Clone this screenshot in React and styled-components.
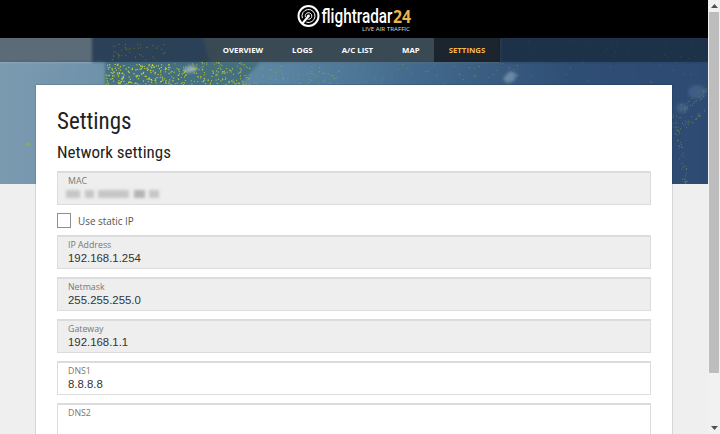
import React, { useMemo } from 'react';
import styled, { createGlobalStyle } from 'styled-components';

const Global = createGlobalStyle`
html, body {
  margin: 0;
  padding: 0;
  height: 434px;
  overflow: hidden;
  background: #f1f1f1;
}
`

const Shell = styled.div`
display: flex;
width: 720px;
height: 434px;
overflow: hidden;
`
const Page = styled.div`
width: 708px;
height: 434px;
overflow: hidden;
background: #efefef;
font-family: "Open Sans", sans-serif;
`
const Header = styled.header`
height: 38px;
background: #000;
display: flex;
justify-content: center;
align-items: center;
`
const Hero = styled.div`
position: relative;
height: 146px;
overflow: hidden;
`
const MapArt = styled.svg`
position: absolute;
left: 0;
top: 0;
`
const LandLayer = styled.g`
filter: blur(1.5px);
`
const DotLayer = styled.g`
filter: blur(0.35px);
`
const Nav = styled.nav`
position: relative;
height: 24px;
display: flex;
justify-content: center;
background: rgba(24, 36, 48, 0.5);
`
const NavItem = styled.a`
padding: 0 14.5px;
line-height: 24px;
font-size: 7.8px;
font-weight: 700;
color: ${p => (p.$active ? '#f5b94d' : '#fff')};
background: ${p => (p.$active ? 'rgba(16, 22, 30, 0.72)' : 'transparent')};
`
const Card = styled.main`
position: relative;
width: 594px;
margin: -99px auto 0;
padding: 21px;
background: #fff;
box-shadow: 0 0 1px rgba(0, 0, 0, 0.6);
`
const Title = styled.h1`
margin: 2px 0 0;
font-family: Roboto, sans-serif;
font-stretch: condensed;
font-weight: 400;
font-size: 23px;
line-height: 28px;
color: #222;
`
const Subtitle = styled.h2`
margin: 7px 0 9px;
font-family: Roboto, sans-serif;
font-stretch: condensed;
font-weight: 400;
font-size: 17px;
line-height: 19px;
color: #222;
`
const Field = styled.div`
box-sizing: border-box;
height: 34px;
margin-bottom: 8px;
padding: 3px 10px 0;
background: ${p => (p.$locked ? '#eeeeee' : '#fff')};
border: 1px solid #dcdcdc;
border-top-width: 2px;
`
const Label = styled.div`
font-size: 8.8px;
line-height: 11px;
color: #777;
`
const Value = styled.div`
font-family: "Liberation Sans", Arial, sans-serif;
font-size: 11.4px;
line-height: 14px;
color: #333;
`
const Smudges = styled.div`
display: flex;
gap: 4.5px;
margin: 3px 0 0 -2px;
filter: blur(1.5px);
`
const Smudge = styled.span`
width: ${p => p.$w}px;
height: 8px;
background: ${p => p.$tone || '#c6c6c6'};
`
const CheckRow = styled.label`
display: flex;
align-items: center;
gap: 7px;
height: 15px;
margin: 0 0 7px;
font-size: 9.9px;
color: #555;
`
const Box = styled.span`
box-sizing: border-box;
width: 14px;
height: 15px;
background: #fff;
border: 1px solid #8f8f8f;
`
const Scrollbar = styled.div`
box-sizing: border-box;
width: 12px;
height: 434px;
padding: 0 1px;
background: #f1f1f1;
display: flex;
flex-direction: column;
`
const ArrowCell = styled.div`
height: 12px;
display: flex;
align-items: center;
justify-content: center;
`
const Thumb = styled.div`
height: 361px;
background: #bdbdbd;
`
const Gap = styled.div`
flex: 1;
`

// little seeded random so the dots stay put between runs
const seeded = seed => () => {
  seed = (seed * 16807) % 2147483647;
  return seed / 2147483647;
};

const scatter = (rand, count, x0, x1, y0, y1, fill, r) => {
  const out = [];
  for (let i = 0; i < count; i++) {
    out.push({
      x: x0 + rand() * (x1 - x0),
      y: y0 + rand() * (y1 - y0),
      fill,
      r,
    });
  }
  return out;
};

// dots strung along a route, for the coast traffic on the right
const route = (rand, count, [x0, y0], [x1, y1], fill) => {
  const out = [];
  for (let i = 0; i < count; i++) {
    const t = rand();
    out.push({
      x: x0 + t * (x1 - x0) + (rand() - 0.5) * 7,
      y: y0 + t * (y1 - y0) + (rand() - 0.5) * 7,
      fill,
      r: 0.55,
    });
  }
  return out;
};

const WorldMap = () => {
  const dots = useMemo(() => {
    const rand = seeded(4211);
    return [
      ...scatter(rand, 170, 106, 170, 26, 47, '#d2dc2c', 0.65),
      ...scatter(rand, 130, 170, 250, 30, 47, '#c2d030', 0.6),
      ...scatter(rand, 30, 170, 250, 24, 30, '#a8bc40', 0.55),
      ...scatter(rand, 45, 250, 340, 28, 47, '#8da560', 0.55),
      ...scatter(rand, 45, 110, 165, 6, 22, '#b0c038', 0.6),
      ...scatter(rand, 35, 350, 520, 26, 47, '#6f8f68', 0.55),
      ...scatter(rand, 40, 500, 708, 3, 45, '#557a70', 0.5),
      ...route(rand, 40, [708, 50], [676, 78], '#5f7f58'),
      ...route(rand, 30, [708, 72], [678, 92], '#5f7f58'),
      ...route(rand, 50, [674, 80], [686, 146], '#5f7f58'),
      ...scatter(rand, 10, 22, 32, 102, 108, '#8fb060', 0.7),
    ];
  }, []);

  return (
    <MapArt width="708" height="146" viewBox="0 0 708 146">
      <defs>
        <linearGradient id="sea" x1="0" x2="1" y1="0" y2="0">
          <stop offset="0" stopColor="#7b9bb0" />
          <stop offset="0.15" stopColor="#6f92aa" />
          <stop offset="0.4" stopColor="#5a84a2" />
          <stop offset="0.62" stopColor="#3f6588" />
          <stop offset="0.8" stopColor="#2f4e74" />
          <stop offset="1" stopColor="#2c4a72" />
        </linearGradient>
      </defs>
      <LandLayer>
        <rect x="-10" y="-10" width="728" height="166" fill="url(#sea)" />
        <polygon points="-10,-10 92,-10 92,24 -10,24" fill="#9eb4c0" />
        <polygon points="92,-10 200,-10 210,24 92,24" fill="#3e5e7e" />
        <polygon points="200,-10 500,-10 500,24 210,24" fill="#5c707a" />
        <polygon points="500,-10 718,-10 718,24 500,24" fill="#223e60" />
        <polygon points="105,24 260,24 240,47 105,47" fill="#44707f" />
        <polygon points="183,32 190,27 198,30 194,34 186,35" fill="#8fa9b5" />
        <polygon points="503,40 510,33 517,36 514,43 506,45" fill="#6a88a6" />
        <ellipse cx="697" cy="54" rx="9" ry="7" fill="#3f5e86" />
        <ellipse cx="682" cy="70" rx="6" ry="5" fill="#3f5e86" />
      </LandLayer>
      <DotLayer>
        {dots.map((d, i) => (
          <circle key={i} cx={d.x} cy={d.y} r={d.r} fill={d.fill} />
        ))}
      </DotLayer>
    </MapArt>
  );
};

const Logo = () => (
  <svg width="116" height="32" viewBox="0 0 116 32">
    <circle cx="12.5" cy="13" r="10" fill="none" stroke="#fff" strokeWidth="2" />
    <g fill="none" stroke="#fff" strokeWidth="1">
      <path d="M6.4 15.2 A6.5 6.5 0 1 1 10.3 19.1" />
      <path d="M9.4 14.1 A3.3 3.3 0 1 1 11.4 16.1" />
    </g>
    <path d="M12.5 13 L6 21" fill="none" stroke="#fff" strokeWidth="2" />
    <circle cx="12.5" cy="13" r="1.4" fill="#fff" />
    <text
      x="25.5"
      y="20"
      fontFamily="Roboto, sans-serif"
      fontWeight="500"
      fontSize="21"
      fill="#fff"
      textLength="71"
      lengthAdjust="spacingAndGlyphs"
    >
      flightradar
    </text>
    <text
      x="97"
      y="20"
      fontFamily="'Open Sans', sans-serif"
      fontWeight="700"
      fontSize="17"
      fill="#e8b54d"
      textLength="18"
      lengthAdjust="spacingAndGlyphs"
    >
      24
    </text>
    <text
      x="66"
      y="27.5"
      fontFamily="'Open Sans', sans-serif"
      fontSize="5.5"
      fill="#ddd"
      textLength="48"
      lengthAdjust="spacingAndGlyphs"
    >
      LIVE AIR TRAFFIC
    </text>
  </svg>
);

const Arrow = ({ up }) => (
  <svg width="7" height="4" viewBox="0 0 7 4">
    <polygon points={up ? '3.5,0 7,4 0,4' : '0,0 7,0 3.5,4'} fill="#505050" />
  </svg>
);

const navItems = ['OVERVIEW', 'LOGS', 'A/C LIST', 'MAP', 'SETTINGS'];

const App = () => {
  return (
    <Shell>
      <Global />
      <Page>
        <Header>
          <Logo />
        </Header>
        <Hero>
          <WorldMap />
          <Nav>
            {navItems.map(item => (
              <NavItem key={item} $active={item === 'SETTINGS'}>{item}</NavItem>
            ))}
          </Nav>
        </Hero>
        <Card>
          <Title>Settings</Title>
          <Subtitle>Network settings</Subtitle>
          <Field $locked>
            <Label>MAC</Label>
            <Smudges>
              <Smudge $w={14} />
              <Smudge $w={9} />
              <Smudge $w={31} />
              <Smudge $w={11} $tone="#b4b4b4" />
              <Smudge $w={10} />
            </Smudges>
          </Field>
          <CheckRow>
            <Box />
            Use static IP
          </CheckRow>
          <Field $locked>
            <Label>IP Address</Label>
            <Value>192.168.1.254</Value>
          </Field>
          <Field $locked>
            <Label>Netmask</Label>
            <Value>255.255.255.0</Value>
          </Field>
          <Field $locked>
            <Label>Gateway</Label>
            <Value>192.168.1.1</Value>
          </Field>
          <Field>
            <Label>DNS1</Label>
            <Value>8.8.8.8</Value>
          </Field>
          <Field>
            <Label>DNS2</Label>
          </Field>
        </Card>
      </Page>
      <Scrollbar>
        <ArrowCell><Arrow up /></ArrowCell>
        <Thumb />
        <Gap />
        <ArrowCell><Arrow /></ArrowCell>
      </Scrollbar>
    </Shell>
  );
};

export default App;
